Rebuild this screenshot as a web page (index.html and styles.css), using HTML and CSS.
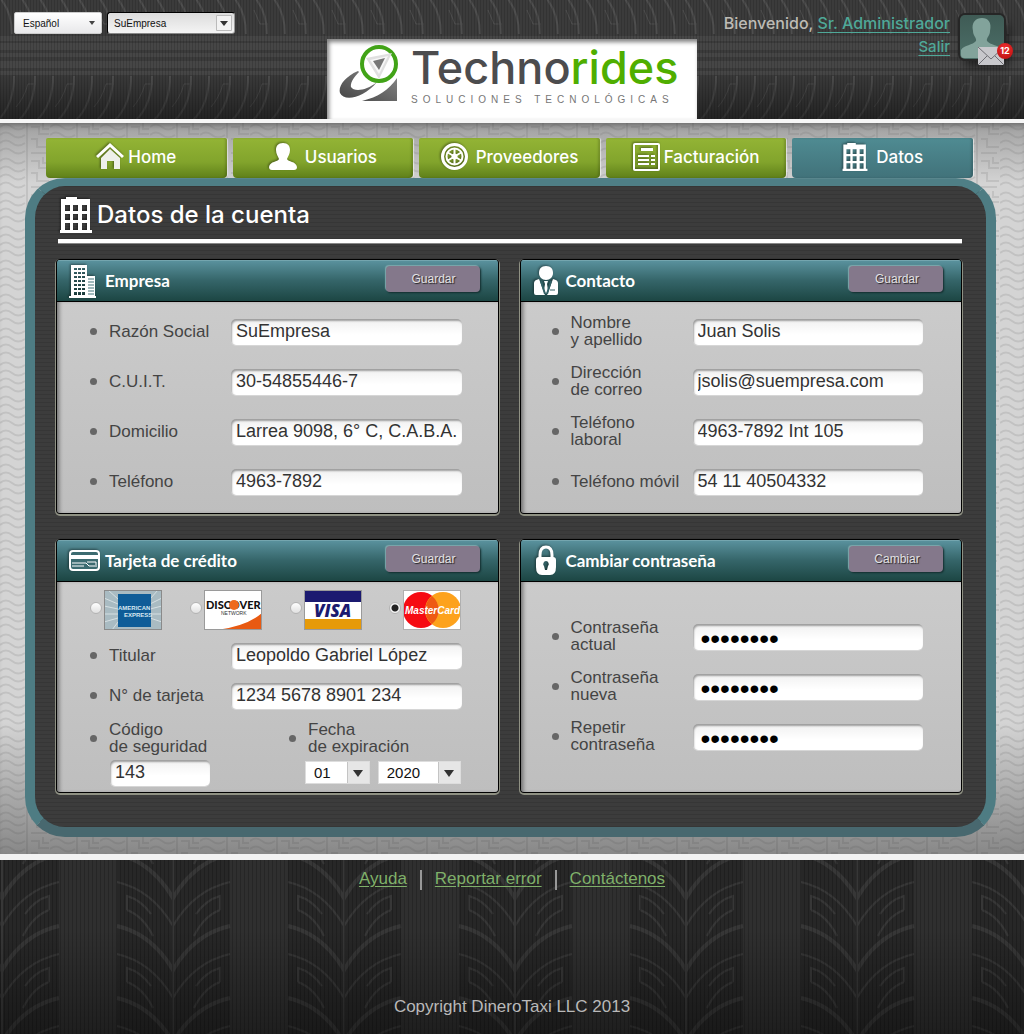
FILE: index.html
```html
<!DOCTYPE html>
<html lang="es">
<head>
<meta charset="utf-8">
<meta name="viewport" content="width=device-width, initial-scale=1">
<title>Technorides - Datos de la cuenta</title>
<link rel="stylesheet" href="styles.css">
</head>
<body>
<svg class="defs" aria-hidden="true">
  <symbol id="building" viewBox="0 0 32 36">
    <path fill-rule="evenodd" d="M6 0h11v2h13v31h2v3H0v-3h1V2h5zM5 8v6h5V8zm8 0v6h5V8zm9 0v6h5V8zM5 17v6h5v-6zm8 0v6h5v-6zm9 0v6h5v-6zM5 26v7h5v-7zm8 0v7h5v-7zm9 0v7h5v-7z"/>
  </symbol>
</svg>

<header class="top">
  <div class="pickers">
    <select class="pick pick-lang" aria-label="Idioma"><option>Español</option></select>
    <select class="pick pick-company" aria-label="Empresa"><option>SuEmpresa</option></select>
  </div>
  <div class="brand">
    <svg class="brand-mark" viewBox="0 0 62 62" aria-hidden="true">
      <defs><linearGradient id="mark" x1="0" y1="1" x2="1" y2="0"><stop offset="0" stop-color="#444"/><stop offset="1" stop-color="#8a8a8a"/></linearGradient></defs>
      <path fill="url(#mark)" d="M19 27C5 33-1 43 1 49c4 9 24 5 37-11C27 47 15 48 12 43c-1-4 3-10 8-15zM58 34v23H23c16-4 27-11 35-23z"/>
      <circle cx="40" cy="20" r="17" fill="#fff" stroke="#41a317" stroke-width="4"/>
      <path fill="#e0e0e0" d="M27 14l26-5-13 26z"/><path fill="#f7f7f7" d="M31 16l18-4-9 18z"/><path fill="#777" d="M34 17l12-3-6 12z"/>
    </svg>
    <div class="brand-text">
      <div class="brand-name">Techno<span>rides</span></div>
      <div class="brand-sub">SOLUCIONES TECNOLÓGICAS</div>
    </div>
  </div>
  <div class="user">
    <div class="user-text">
      <p>Bienvenido, <a href="#cuenta">Sr. Administrador</a></p>
      <p><a href="#salir">Salir</a></p>
    </div>
    <div class="avatar">
      <svg viewBox="0 0 44 44" aria-hidden="true"><path fill="#82a39b" d="M1 40v-5c3-5 12-5 15-9 1-3-3-5-3-10-2-9 3-13 9-13s10 4 8 13c0 5-4 7-3 10 3 4 12 4 16 9v5q0 3-3 3H4q-3 0-3-3z"/></svg>
      <svg class="mail" viewBox="0 0 26 18" aria-hidden="true"><path fill="#c8c8cc" d="M0 0h26v18H0z"/><path fill="none" stroke="#6e6e74" d="M0 0l13 12L26 0M0 18l9-9M26 18l-9-9"/></svg>
      <span class="badge">12</span>
    </div>
  </div>
</header>

<main class="stage">
  <nav class="tabs">
    <a class="tab" href="#home"><svg width="28" height="27" viewBox="0 0 28 27" aria-hidden="true"><path d="M14 0l14 13-2 2L14 4 2 15l-2-2z"/><path fill="#eef0ea" d="M14 6l10 9v11h-6v-8h-7v8H5V15z"/></svg>Home</a>
    <a class="tab tab-wide" href="#usuarios"><svg width="28" height="27" viewBox="0 0 28 27" aria-hidden="true"><path d="M14 0c5 0 7 3 7 7s-2 6-3 9c1 3 9 2 10 8 0 2-1 3-3 3H3c-2 0-3-1-3-3 1-6 9-5 10-8-1-3-3-5-3-9s2-7 7-7z"/></svg>Usuarios</a>
    <a class="tab tab-wide" href="#proveedores"><svg width="27" height="27" viewBox="0 0 27 27" aria-hidden="true"><g fill="none" stroke="#fff"><circle cx="13.500" cy="13.500" r="12" stroke-width="3"/><circle cx="13.500" cy="13.500" r="8" stroke-width="2"/><path stroke-width="2" d="M13.500 5v17M6 9l15 9M6 18l15-9"/></g><circle cx="13.500" cy="13.500" r="3"/></svg>Proveedores</a>
    <a class="tab" href="#facturacion"><svg width="27" height="28" viewBox="0 0 27 28" aria-hidden="true"><rect x="1" y="1" width="25" height="26" rx="1" fill="none" stroke="#fff" stroke-width="2"/><path d="M8 5h12v3H8zM5 12h11v2H5zM5 16h11v2H5zM5 20h11v2H5zM18 12h4v2h-4zM18 16h4v2h-4zM18 20h4v2h-4z"/></svg>Facturación</a>
    <a class="tab tab-wide tab-on" href="#datos" aria-current="page"><svg width="26" height="28" aria-hidden="true"><use href="#building"/></svg>Datos</a>
  </nav>

  <div class="panel">
    <h1><svg width="32" height="36" aria-hidden="true"><use href="#building"/></svg>Datos de la cuenta</h1>
    <div class="cards">

      <form class="card">
        <div class="card-head">
          <svg class="card-icon" viewBox="0 0 34 34" aria-hidden="true"><path fill-rule="evenodd" d="M5 1h15v11h8v20h1v2H2v-2h2V1zM7 4v2h3V4zm4 0v2h3V4zm4 0v2h3V4zM7 8v2h3V8zm4 0v2h3V8zm4 0v2h3V8zM7 12v2h3v-2zm4 0v2h3v-2zm4 0v2h3v-2zM7 16v2h3v-2zm4 0v2h3v-2zm4 0v2h3v-2zM7 20v2h3v-2zm4 0v2h3v-2zm4 0v2h3v-2zM7 24v2h3v-2zm4 0v2h3v-2zm4 0v2h3v-2zM7 28v3h3v-3zm4 0v3h3v-3zm4 0v3h3v-3z"/><path stroke="#44757a" d="M22 14v17M24 14v17M26 14v17" stroke-dasharray="2 1"/></svg>
          <h2>Empresa</h2>
          <button type="button">Guardar</button>
        </div>
        <div class="card-body">
          <div class="row"><label for="razon">Razón Social</label><input class="field" id="razon" type="text" value="SuEmpresa"></div>
          <div class="row"><label for="cuit">C.U.I.T.</label><input class="field" id="cuit" type="text" value="30-54855446-7"></div>
          <div class="row"><label for="domicilio">Domicilio</label><input class="field" id="domicilio" type="text" value="Larrea 9098, 6° C, C.A.B.A."></div>
          <div class="row"><label for="tel">Teléfono</label><input class="field" id="tel" type="text" value="4963-7892"></div>
        </div>
      </form>

      <form class="card">
        <div class="card-head">
          <svg class="card-icon" viewBox="0 0 34 34" aria-hidden="true"><path d="M18 2c5 0 7 3 7 7s-3 7-7 7-7-3-7-7 2-7 7-7z"/><path d="M11 15l6 16H8q-2 0-2-2V19q0-3 5-4zM25 15l-6 16h9q2 0 2-2V19q0-3-5-4zM16 17h4l-1 3 1 6-2 4-2-4 1-6z"/><path stroke="#336267" stroke-width="2" fill="none" d="M13 17l4 13M23 17l-4 13"/><path stroke="#336267" d="M22 26h5"/></svg>
          <h2>Contacto</h2>
          <button type="button">Guardar</button>
        </div>
        <div class="card-body">
          <div class="row"><label for="nombre">Nombre<br>y apellido</label><input class="field" id="nombre" type="text" value="Juan Solis"></div>
          <div class="row"><label for="correo">Dirección<br>de correo</label><input class="field" id="correo" type="email" value="jsolis@suempresa.com"></div>
          <div class="row"><label for="laboral">Teléfono<br>laboral</label><input class="field" id="laboral" type="text" value="4963-7892 Int 105"></div>
          <div class="row"><label for="movil">Teléfono móvil</label><input class="field" id="movil" type="text" value="54 11 40504332"></div>
        </div>
      </form>

      <form class="card">
        <div class="card-head">
          <svg class="card-icon" viewBox="0 0 34 34" aria-hidden="true"><rect x="3" y="7" width="29" height="19" rx="3" fill="#3c6b70" stroke="#fff" stroke-width="2"/><path d="M3 11h29v4H3z"/><path fill="none" stroke="#fff" d="M5 19h14l3 3h8M5 22h12M20 18h9v3"/></svg>
          <h2>Tarjeta de crédito</h2>
          <button type="button">Guardar</button>
        </div>
        <div class="card-body card-pay">
          <div class="brands">
            <label><input type="radio" name="marca" aria-label="American Express"><svg viewBox="0 0 58 40" aria-hidden="true"><rect width="58" height="40" fill="#a9bbc2"/><path stroke="#d5dfe2" d="M0 8l14 6M0 16l14 3M0 24h14M0 32l14-4M8 40l6-8M58 8l-12 6M58 16l-12 3M58 24H46M58 32l-12-4M4 0l10 9M54 0l-8 9"/><rect x="14" y="4" width="33" height="33" fill="#0f5d98"/><g font-family="Liberation Sans" font-weight="700" font-size="6" fill="#d8e8f0"><text x="14" y="20">AMERICAN</text><text x="20" y="27">EXPRESS</text></g><rect x=".5" y=".5" width="57" height="39" fill="none" stroke="#8a8a8a"/></svg></label>
            <label><input type="radio" name="marca" aria-label="Discover"><svg viewBox="0 0 58 40" aria-hidden="true"><rect width="58" height="40" fill="#fff"/><path fill="#e85a12" d="M13 40q30-4 45-17v17z"/><text x="2" y="19" font-family="Lato" font-weight="900" font-size="11" fill="#111">DISCOVER</text><circle cx="30" cy="15" r="5" fill="#ee6a1c"/><text x="17" y="25" font-family="Liberation Sans" font-size="5" fill="#333">NETWORK</text><rect x=".5" y=".5" width="57" height="39" fill="none" stroke="#9a9a9a"/></svg></label>
            <label><input type="radio" name="marca" aria-label="Visa"><svg viewBox="0 0 58 40" aria-hidden="true"><rect width="58" height="40" fill="#fff"/><path fill="#1b1a70" d="M0 0h58v12H0z"/><path fill="#e69a08" d="M0 29h58v11H0z"/><text x="10" y="27" font-family="Open Sans" font-weight="800" font-style="italic" font-size="17" fill="#1b1a70">VISA</text><rect x=".5" y=".5" width="57" height="39" fill="none" stroke="#9a9a9a"/></svg></label>
            <label><input type="radio" name="marca" aria-label="MasterCard" checked><svg viewBox="0 0 58 40" aria-hidden="true"><rect width="58" height="40" fill="#fff"/><circle cx="18" cy="20" r="18" fill="#f60b12"/><circle cx="40" cy="20" r="18" fill="#fda21c"/><path fill="#ee5a14" d="M29 6a18 18 0 0 1 0 28a18 18 0 0 1 0-28z"/><text x="2" y="24" font-family="Liberation Sans" font-weight="700" font-style="italic" font-size="10" fill="#fff">MasterCard</text><rect x=".5" y=".5" width="57" height="39" fill="none" stroke="#b0b0b0"/></svg></label>
          </div>
          <div class="row"><label for="titular">Titular</label><input class="field" id="titular" type="text" value="Leopoldo Gabriel López"></div>
          <div class="row"><label for="numero">N° de tarjeta</label><input class="field" id="numero" type="text" value="1234 5678 8901 234"></div>
          <div class="extras">
            <div class="extra">
              <label for="codigo">Código<br>de seguridad</label>
              <input class="field field-code" id="codigo" type="text" value="143">
            </div>
            <div class="extra">
              <label for="mes">Fecha<br>de expiración</label>
              <div class="dates">
                <select class="date" id="mes"><option>01</option></select>
                <select class="date date-year" aria-label="Año de expiración"><option>2020</option></select>
              </div>
            </div>
          </div>
        </div>
      </form>

      <form class="card">
        <div class="card-head">
          <svg class="card-icon" viewBox="0 0 34 34" aria-hidden="true"><path fill="none" stroke="#fff" stroke-width="3" d="M12 15V11q0-8 6-8t6 8v4"/><path fill-rule="evenodd" d="M11 13h14q3 0 3 3v7q0 8-6 8h-8q-6 0-6-8v-7q0-3 3-3zM18 17a3 3 0 0 0-2 5l1 4h2l1-4a3 3 0 0 0-2-5z"/></svg>
          <h2>Cambiar contraseña</h2>
          <button type="button">Cambiar</button>
        </div>
        <div class="card-body card-pass">
          <div class="row"><label for="actual">Contraseña<br>actual</label><input class="field" id="actual" type="password" value="abcdefgh"></div>
          <div class="row"><label for="nueva">Contraseña<br>nueva</label><input class="field" id="nueva" type="password" value="abcdefgh"></div>
          <div class="row"><label for="repetir">Repetir<br>contraseña</label><input class="field" id="repetir" type="password" value="abcdefgh"></div>
        </div>
      </form>

    </div>
  </div>
</main>

<footer class="foot">
  <nav class="foot-links">
    <a href="#ayuda">Ayuda</a>
    <a href="#reportar">Reportar error</a>
    <a href="#contacto">Contáctenos</a>
  </nav>
  <p>Copyright DineroTaxi LLC 2013</p>
</footer>
</body>
</html>
```
FILE: styles.css
```css
* { box-sizing: border-box; }

body {
  margin: 0;
  min-height: 100vh;
  display: flex;
  flex-direction: column;
  background: #2a2a2a;
  font-family: "Liberation Sans", Arial, sans-serif;
  font-size: 17px;
}

p, h1, h2 { margin: 0; }
.defs { position: absolute; width: 0; height: 0; }

/* Header */
.top {
  display: grid;
  grid-template-columns: 1fr 370px 1fr;
  min-height: 119px;
  background:
    linear-gradient(transparent 60%, rgba(0,0,0,.4)),
    repeating-linear-gradient(90deg, rgba(0,0,0,.14) 0 1px, transparent 1px 3px),
    url("data:image/svg+xml,%3Csvg xmlns='http://www.w3.org/2000/svg' width='39' height='119'%3E%3Cg fill='none' stroke='%234e4e4e' stroke-width='2'%3E%3Cpath d='M-30-14Q-6 4-6 34M-12-14Q12 4 12 34M9-14Q33 4 33 34M27-14Q51 4 51 34M-30 128Q-4 112-4 76M-12 128Q14 112 14 76M9 128Q35 112 35 76M27 128Q53 112 53 76'/%3E%3Cpath d='M20 10l6 14h8M36 84h-8q-4 14-12 23' stroke-width='1'/%3E%3C/g%3E%3Cpath fill='%23464646' d='M0 36h39v5H0zM0 43h39v7H0zM0 53h39v4H0zM0 61h39v7H0zM0 71h39v4H0z'/%3E%3C/svg%3E"),
    #3b3b3b;
}
.pickers { display: flex; gap: 5px; padding: 12px 0 0 14px; align-items: flex-start; }
.pick {
  appearance: none;
  height: 22px;
  padding: 0 24px 0 8px;
  border: 1px solid #ccc;
  border-radius: 2px;
  font: 10px "Liberation Sans", Arial, sans-serif;
  color: #111;
}
.pick-lang {
  width: 88px;
  background: url("data:image/svg+xml,%3Csvg xmlns='http://www.w3.org/2000/svg' width='6' height='4'%3E%3Cpath fill='%23444' d='M0 0h6L3 4z'/%3E%3C/svg%3E") right 6px center no-repeat, linear-gradient(#fff, #e8e8ea);
}
.pick-company {
  width: 128px;
  padding-left: 6px;
  border-color: #000 #999 #888 #000;
  border-radius: 3px;
  background: url("data:image/svg+xml,%3Csvg xmlns='http://www.w3.org/2000/svg' width='16' height='16'%3E%3Cpath fill='%23f2f2f2' stroke='%23bbb' d='M.5.500h15v15H.5z'/%3E%3Cpath fill='%23333' d='M4 6h8l-4 5z'/%3E%3C/svg%3E") right 2px center no-repeat, linear-gradient(#dcdcdc, #f4f4f4);
}

.brand {
  align-self: end;
  display: flex;
  gap: 8px;
  height: 80px;
  padding: 5px 12px 0;
  background: #fff;
  box-shadow: inset 2px 3px 4px rgba(0,0,0,.5);
}
.brand-mark { width: 62px; height: 62px; flex: none; }
.brand-text { padding-left: 2px; white-space: nowrap; }
.brand-name { font: 500 45px/48px Inter, sans-serif; color: #4c4c4e; }
.brand-name span { color: #4fae00; }
.brand-sub { padding-top: 2px; font-size: 10px; line-height: 12px; letter-spacing: 5px; color: #777; }

.user {
  display: flex;
  justify-content: flex-end;
  gap: 10px;
  padding: 12px 20px 0 0;
  font: 500 16px/23px Inter, sans-serif;
  color: #bdbbb6;
  text-align: right;
}
.user-text { white-space: nowrap; }
.user a { color: #4fa898; text-decoration-thickness: 1px; text-underline-offset: 3px; }
.user p + p { font-size: 15px; }
.avatar {
  position: relative;
  width: 44px;
  height: 44px;
  margin-top: 3px;
  border-radius: 5px;
  background: linear-gradient(#3f5b55, #4c6f68);
  box-shadow: 0 0 0 2px #262626, 5px 8px 10px rgba(0,0,0,.5);
}
.avatar svg { display: block; }
.avatar .mail { position: absolute; left: 18px; top: 32px; width: 26px; height: 18px; }
.badge {
  position: absolute;
  left: 37px;
  top: 28px;
  width: 16px;
  height: 16px;
  border-radius: 8px;
  background: radial-gradient(circle at 50% 30%, #ee3030, #b80d0d);
  color: #fff;
  font: 700 9px/16px Inter, sans-serif;
  text-align: center;
}

/* Main area */
.stage {
  padding: 15px 28px 17px 25px;
  border-top: 4px solid #f6f6f6;
  border-bottom: 6px solid #f2f2f2;
  box-shadow: inset 0 6px 6px -4px rgba(0,0,0,.35);
  background:
    linear-gradient(rgba(95,95,95,.45), transparent 60px, transparent 82%, rgba(60,60,60,.5)),
    url("data:image/svg+xml,%3Csvg xmlns='http://www.w3.org/2000/svg' width='50' height='34'%3E%3Cg fill='none' stroke='%23c2c2c2' stroke-width='2'%3E%3Cpath d='M0 4q6-5 12 0t13 0M0 12q6-5 12 0t13 0M0 20q6-5 12 0t13 0M0 28q6-5 12 0t13 0M27 0v34M31 4h8v7h10M31 16h6v8h12M31 30h16M43 0v6h6'/%3E%3C/g%3E%3C/svg%3E"),
    #d4d4d4;
}
.tabs {
  display: grid;
  grid-template-columns: repeat(5, 1fr);
  gap: 6px;
  padding: 0 23px 0 21px;
}
.tab {
  display: flex;
  align-items: center;
  justify-content: center;
  gap: 4px;
  height: 40px;
  padding-bottom: 3px;
  border-radius: 2px 2px 4px 4px;
  background: linear-gradient(#93b435, #82a42c 60%, #5f8019);
  box-shadow: inset -2px 0 2px rgba(0,0,0,.15), 1px 0 1px rgba(255,255,255,.6);
  color: #fff;
  font: 500 17px/24px Inter, sans-serif;
  text-decoration: none;
}
.tab-wide { gap: 8px; }
.tab-on { background: linear-gradient(#4f8b92, #41727a); }
.tab svg, h1 svg, .card-icon { fill: #fff; flex: none; filter: drop-shadow(-1px -1px 1px rgba(0,0,0,.4)); }

.panel {
  padding: 10px 24px 34px 21px;
  border: 10px solid #4b737a;
  border-top: 8px solid #4f7f86;
  border-radius: 40px;
  background:
    repeating-linear-gradient(rgba(0,0,0,.1) 0 1px, transparent 1px 4px),
    #3c3c3c;
  border-color: #4f7f86 #4e7c83 #48686f;
}
h1 {
  display: flex;
  align-items: center;
  gap: 5px;
  height: 47px;
  margin: 0 0 16px 2px;
  padding: 0 0 6px 2px;
  border-bottom: 4px solid #fff;
  box-shadow: 0 1px 0 #888;
  color: #fff;
  font: 500 24px/30px Inter, sans-serif;
}
.cards { display: grid; grid-template-columns: 1fr 1fr; gap: 25px 21px; }

.card {
  display: flex;
  flex-direction: column;
  border: 1px solid #000;
  border-radius: 4px;
  box-shadow: 0 1px 0 1px #8f9183;
  overflow: hidden;
}
.card-head {
  display: flex;
  align-items: center;
  height: 42px;
  padding: 0 18px 0 10px;
  border-bottom: 1px solid #000;
  background: linear-gradient(#5b939f, #356569 50%, #1c4643);
  box-shadow: inset 0 1px 0 #74a5ae;
}
.card-icon { width: 34px; height: 34px; }
h2 {
  flex: 1;
  padding-left: 4px;
  color: #fff;
  font: 700 17px/24px Lato, sans-serif;
}
button {
  width: 94px;
  height: 26px;
  margin-bottom: 4px;
  padding: 0 0 0 2px;
  border: 0;
  border-radius: 4px;
  background: #84788b;
  box-shadow: -1px -1px 1px #7fa9ad, 1px 1px 2px #122c2d;
  color: #e4e2e4;
  font: 12px "Liberation Sans", Arial, sans-serif;
  text-shadow: 1px 1px 1px #222;
}
.card-body {
  flex: 1;
  min-height: 210px;
  padding: 5px 36px 6px 33px;
  background: linear-gradient(#cbcbcb, #bebebe);
  box-shadow: inset 4px 0 4px -2px rgba(0,0,0,.45);
  color: #444;
}
.card:nth-child(even) .card-head { padding-left: 7px; }
.card:nth-child(even) .card-body { padding-left: 31px; padding-right: 38px; }
.row { display: grid; grid-template-columns: 141px 1fr; align-items: center; height: 50px; }
.row label, .extra label {
  position: relative;
  padding: 0 0 2px 19px;
  line-height: 17px;
  white-space: nowrap;
}
.row label::before, .extra label::before {
  content: "";
  position: absolute;
  left: 0;
  top: 50%;
  width: 7px;
  height: 7px;
  margin-top: -4px;
  border-radius: 4px;
  background: #666;
}
.field {
  width: 100%;
  height: 26px;
  padding: 0 0 1px 5px;
  border: 0;
  border-radius: 5px;
  background: linear-gradient(#f0f0f0, #fff 60%);
  box-shadow: inset 1px 2px 2px rgba(0,0,0,.35), 0 1px 0 #d6d6d6;
  color: #333;
  font: 18px "Liberation Sans", Arial, sans-serif;
}
.field[type="password"] {
  padding: 3px 0 0 8px;
  color: #000;
  font-size: 28px;
}
.card-pass { padding-top: 30px; }

.card-pay { padding-top: 8px; }
.card-pay .row { height: 40px; }
.brands { display: flex; justify-content: space-between; height: 46px; }
.brands label { display: flex; gap: 2px; }
.brands svg { width: 58px; height: 40px; }
.brands input {
  appearance: none;
  width: 12px;
  height: 12px;
  margin: 12px 0 0;
  border: 1px solid #b4b4b4;
  border-radius: 6px;
  background: linear-gradient(#fff, #e0e0e0);
}
.brands input:checked { background: radial-gradient(circle, #222 3px, #f4f4f4 4px); }
.extras { display: grid; grid-template-columns: 199px 1fr; padding-top: 5px; }
.extra { display: flex; flex-direction: column; gap: 3px; }
.field-code { width: 100px; margin-left: 20px; }
.dates { display: flex; gap: 8px; padding: 1px 1px 0 16px; }
.date {
  appearance: none;
  flex: 62;
  min-width: 0;
  height: 23px;
  padding: 0 8px;
  border: 1px solid #ddd;
  border-radius: 0;
  background: url("data:image/svg+xml,%3Csvg xmlns='http://www.w3.org/2000/svg' width='22' height='21'%3E%3Cpath fill='%23e6e6e6' d='M0 0h22v21H0z'/%3E%3Cpath fill='%23c4c4c4' d='M0 0h1v21H0z'/%3E%3Cpath fill='%23333' d='M6 8h10l-5 7z'/%3E%3C/svg%3E") right center no-repeat, #fff;
  color: #111;
  font: 15px "Liberation Sans", Arial, sans-serif;
}
.date-year { flex: 86; }

/* Footer */
.foot {
  flex: 1;
  display: flex;
  flex-direction: column;
  align-items: center;
  justify-content: space-between;
  min-height: 173px;
  padding: 9px 0 17px;
  color: #b9b9b9;
  line-height: 20px;
  background:
    linear-gradient(transparent 40%, rgba(0,0,0,.35)),
    repeating-linear-gradient(90deg, rgba(0,0,0,.2) 0 1px, transparent 1px 4px),
    url("data:image/svg+xml,%3Csvg xmlns='http://www.w3.org/2000/svg' width='171' height='72'%3E%3Cpath fill='%232f2f2f' d='M0 0h29v72H0zM142 0h29v72h-29z'/%3E%3Cg fill='none' stroke='%23373737'%3E%3Cpath stroke-width='4' d='M29-12Q64-4 85 32Q106-4 142-12M29 60Q64 68 85 104Q106 68 142 60'/%3E%3Cpath stroke-width='2' d='M29 16Q64 24 85 60Q106 24 142 16M39 44q16 6 26 26M132 44q-16 6-26 26M39 44V30q14 4 24 18M132 44V30q-14 4-24 18M85 0v72'/%3E%3C/g%3E%3C/svg%3E") 88px 6px,
    #272727;
}
.foot-links { display: flex; align-items: center; }
.foot-links a { color: #7fb069; text-underline-offset: 2px; }
.foot-links a + a { margin-left: 13px; }
.foot-links a + a::before {
  content: "";
  display: inline-block;
  width: 2px;
  height: 20px;
  margin-right: 13px;
  vertical-align: middle;
  background: #999;
}
```
